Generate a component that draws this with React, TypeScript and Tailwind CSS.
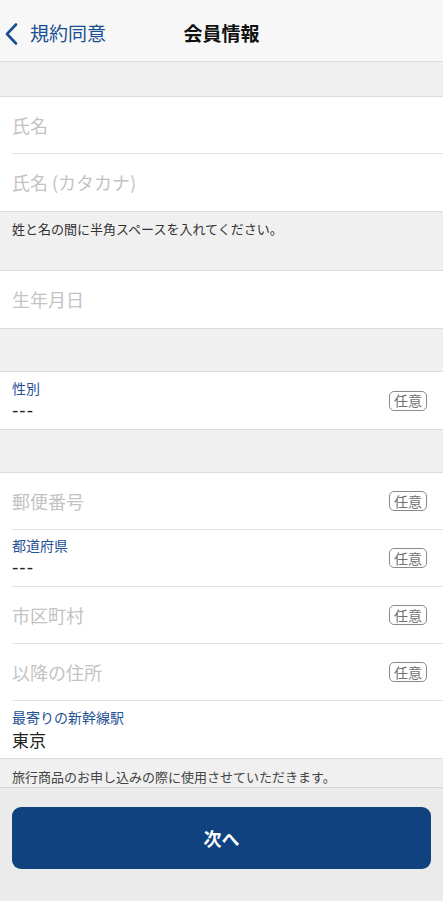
import { ReactNode } from 'react'

const font = { fontFamily: '"Noto Sans CJK JP", "Noto Sans", sans-serif' }

function Badge() {
  return (
    <span className="flex h-[20px] items-center rounded-[5px] border border-[#8a8a8a] px-[4px] text-[14px] text-[#707070]">
      任意
    </span>
  )
}

// one input row, divider drawn inset like iOS table cells
function Row({ children, last, optional }: { children: ReactNode; last?: boolean; optional?: boolean }) {
  return (
    <div className="pl-3">
      <div className={'flex h-[57px] items-center justify-between pr-4 ' + (last ? '' : 'border-b border-[#e2e2e2]')}>
        <div>{children}</div>
        {optional && <Badge />}
      </div>
    </div>
  )
}

function Placeholder({ text }: { text: string }) {
  return <span className="text-[18px] text-[#c3c3c3]">{text}</span>
}

function Labeled({ label, value }: { label: string; value: string }) {
  const empty = value === '---'
  return (
    <div className="flex flex-col">
      <span className="text-[14px] leading-[20px] text-[#1f5296]">{label}</span>
      {empty ? (
        <span className="font-['Liberation_Sans'] text-[19px] leading-[26px] tracking-[1px] text-[#222]">---</span>
      ) : (
        <span className="text-[17px] leading-[26px] text-[#222]">{value}</span>
      )}
    </div>
  )
}

function Group({ children }: { children: ReactNode }) {
  return <div className="border-y border-[#dcdcdc] bg-white">{children}</div>
}

export default function App() {
  return (
    <div style={font} className="flex h-screen w-full flex-col overflow-hidden bg-[#f0f0f0]">
      <div className="relative flex h-[62px] shrink-0 items-center border-b border-[#dcdcdc] bg-[#f7f7f7] pt-[6px]">
        <div className="flex items-center pl-[4px] text-[#184f92]">
          <svg width="16" height="24" viewBox="0 0 16 24" fill="none" stroke="currentColor" strokeWidth="2.6" strokeLinecap="round" strokeLinejoin="round">
            <path d="M12 2.5 L3 12 L12 21.5" />
          </svg>
          <span className="ml-[10px] text-[19px]">規約同意</span>
        </div>
        <div className="pointer-events-none absolute left-0 right-0 text-center text-[19px] font-bold text-[#111]">会員情報</div>
      </div>

      <div className="flex-1 overflow-hidden">
        <div className="h-[34px]" />
        <Group>
          <Row><Placeholder text="氏名" /></Row>
          <Row last><Placeholder text="氏名 (カタカナ)" /></Row>
        </Group>
        <div className="h-[58px] px-3 pt-[7px] text-[13px] text-[#333]">姓と名の間に半角スペースを入れてください。</div>
        <Group>
          <Row last><Placeholder text="生年月日" /></Row>
        </Group>
        <div className="h-[42px]" />
        <Group>
          <Row last optional><Labeled label="性別" value="---" /></Row>
        </Group>
        <div className="h-[42px]" />
        <Group>
          <Row optional><Placeholder text="郵便番号" /></Row>
          <Row optional><Labeled label="都道府県" value="---" /></Row>
          <Row optional><Placeholder text="市区町村" /></Row>
          <Row optional><Placeholder text="以降の住所" /></Row>
          <Row last><Labeled label="最寄りの新幹線駅" value="東京" /></Row>
        </Group>
        <div className="px-3 pt-[8px] text-[13px] text-[#444]">旅行商品のお申し込みの際に使用させていただきます。</div>
      </div>

      <div className="shrink-0 border-t border-[#d4d4d4] bg-[#ebebeb] px-3 pt-[19px] pb-[32px]">
        <button className="flex h-[62px] w-full items-center justify-center rounded-[9px] bg-[#10427f] text-[18px] font-bold text-white">
          次へ
        </button>
      </div>
    </div>
  )
}
